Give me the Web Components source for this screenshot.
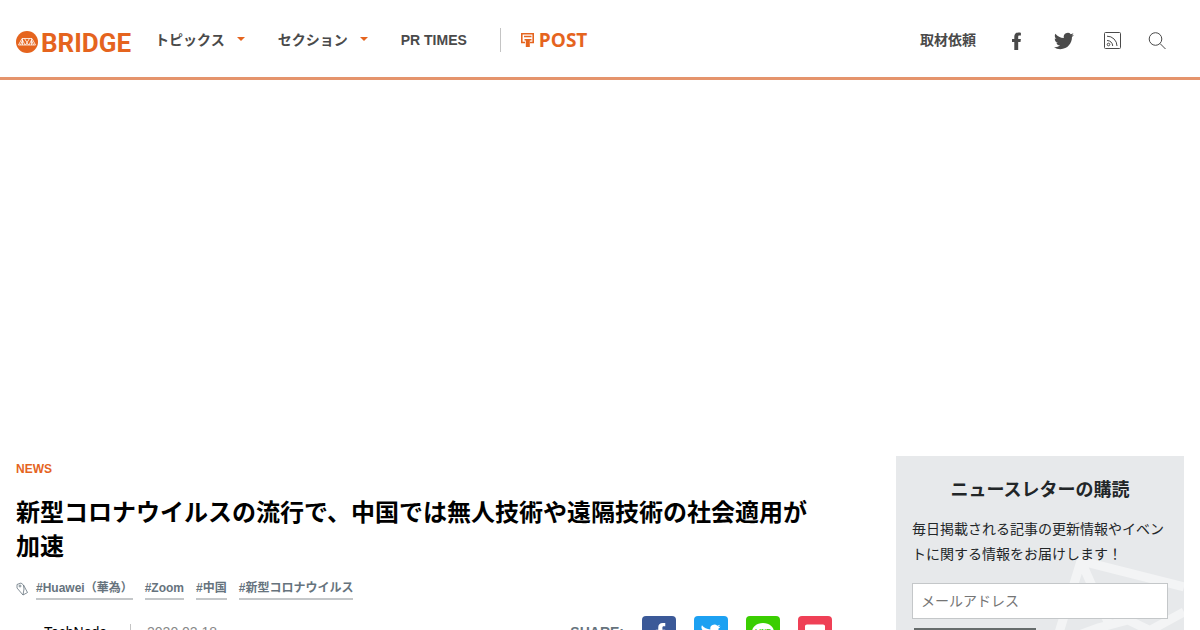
<!DOCTYPE html>
<html lang="ja">
<head>
<meta charset="utf-8">
<title>BRIDGE</title>
<style>
body { margin: 0; background: #fff; color: #000; font-family: "Liberation Sans", "Noto Sans CJK JP", sans-serif; font-size: 14px; overflow-x: hidden; }
</style>
</head>
<body>
<bridge-page></bridge-page>
<script>
const define = (name, html) => {
  const template = document.createElement('template');
  template.innerHTML = html;
  customElements.define(name, class extends HTMLElement {
    constructor() {
      super();
      this.attachShadow({ mode: 'open' }).append(template.content.cloneNode(true));
    }
  });
};

const fb = '<path d="M7.200 18V10H9.500L9.900 6.900H7.200V5C7.200 4.100 7.500 3.600 8.500 3.600H9.900V.7C9.500.6 8.500.5 7.500.5 4.800.5 3.300 2 3.300 4.600V6.900H1V10H3.300V18Z"/>';
const bird = '<path d="M23.950 4.570a10 10 0 0 1-2.820.770 4.960 4.960 0 0 0 2.160-2.720c-.95.550-2 .950-3.120 1.180a4.920 4.920 0 0 0-8.380 4.480C7.690 8.090 4.070 6.130 1.640 3.160a4.820 4.820 0 0 0-.670 2.480c0 1.710.87 3.210 2.190 4.100a4.900 4.900 0 0 1-2.230-.620v.060a4.920 4.920 0 0 0 3.950 4.830 5 5 0 0 1-2.210.090 4.940 4.940 0 0 0 4.600 3.420A9.870 9.870 0 0 1 0 19.540a14 14 0 0 0 7.550 2.210c9.050 0 14-7.500 14-13.980 0-.210 0-.420-.020-.630a9.900 9.900 0 0 0 2.420-2.570Z"/>';

define('bridge-logo', `
<style>
:host { display: block; }
a { display: flex; align-items: center; gap: 2px; color: #e5641e; text-decoration: none; font: 700 26px/28px Roboto, sans-serif; }
svg { display: block; }
</style>
<a href="#"><svg width="23" height="24" viewBox="0 0 23 24" aria-hidden="true"><circle cx="11" cy="11" r="11" fill="#e5641e"/><path d="M2.500 14L6 7.500H16L19.500 14ZM6.500 7.500V14M15.500 7.500V14M6.500 9L9 14M15.500 9L13 14M8.500 7.500L12.500 14M13.500 7.500L9.500 14M4.500 14L6.500 9M17.500 14L15.500 9" fill="none" stroke="#fff" stroke-width=".8"/></svg><span>BRIDGE</span></a>`);

define('nav-link', `
<style>
:host { display: block; }
a { display: flex; align-items: center; gap: 12px; color: #4a4a4a; font-weight: 700; font-size: 14px; line-height: 24px; text-decoration: none; white-space: nowrap; }
.arrow { display: none; border: 4px solid transparent; border-top-color: #e5641e; border-bottom: 0; margin-bottom: 2px; }
:host([menu]) .arrow { display: block; }
</style>
<a href="#"><slot></slot><span class="arrow"></span></a>`);

define('site-header', `
<style>
:host { display: block; border-bottom: 3px solid #e5946c; }
header { display: flex; align-items: center; height: 77px; padding: 0 33px 0 16px; color: #4a4a4a; }
nav { display: flex; align-items: center; margin-left: 24px; flex: 1; }
bridge-logo { padding-top: 8px; }
.main, .side { display: flex; align-items: center; }
.main { padding-top: 2px; gap: 33px; flex: 1; }
.side { padding-top: 4px; }
.rule { height: 24px; border-left: 1px solid #c4c4c4; }
.partner { display: flex; align-items: center; gap: 20px; }
.post { display: flex; align-items: center; gap: 4px; color: #e5641e; font: 700 19px/24px "Open Sans", sans-serif; text-decoration: none; }
.side a { display: block; }
.side nav-link { padding-bottom: 2px; }
svg { display: block; }
.fb { margin-left: 35px; } .tw { margin-left: 32px; } .rss { margin-left: 30px; } .find { margin-left: 26px; }
button { border: 0; padding: 0; background: none; }
</style>
<header>
<bridge-logo></bridge-logo>
<nav>
<div class="main">
<nav-link menu>トピックス</nav-link><nav-link menu>セクション</nav-link><nav-link>PR TIMES</nav-link>
<div class="partner"><span class="rule"></span>
<a class="post" href="#"><svg width="14" height="16" viewBox="0 0 14 16" aria-hidden="true"><path d="M4 10.500H.8V1.800H12.200V10.500H9M3 4.500H10.500" fill="none" stroke="#e5641e" stroke-width="1.600"/><path d="M3.500 7H10.500V8.500H8.800V15H4.800V8.500H3.500Z" fill="#e5641e"/></svg>POST</a></div>
</div>
<div class="side">
<nav-link>取材依頼</nav-link>
<a class="fb" href="#" aria-label="Facebook"><svg width="11" height="18" viewBox="0 0 11 18" fill="#4a4a4a">${fb}</svg></a>
<a class="tw" href="#" aria-label="Twitter"><svg width="20" height="20" viewBox="0 0 24 24" fill="#4a4a4a">${bird}</svg></a>
<a class="rss" href="#" aria-label="RSS"><svg width="18" height="18" viewBox="0 0 18 18" fill="none" stroke="#4a4a4a"><rect x=".5" y=".5" width="16" height="16" rx="1"/><circle cx="4.500" cy="12.500" r="1.300"/><path d="M3 8.500A5.500 5.500 0 0 1 8.700 14M3 4.200A9.800 9.800 0 0 1 13 14"/></svg></a>
<button class="find" aria-label="検索"><svg width="19" height="19" viewBox="0 0 19 19" fill="none" stroke="#4a4a4a"><circle cx="7.500" cy="8" r="6.300"/><path d="M12 12.500L17.500 18"/></svg></button>
</div>
</nav>
</header>`);

define('tag-link', `
<style>
:host { display: block; }
a { display: block; border-bottom: 2px solid #c4c7c9; color: #66737d; font-size: 12px; line-height: 20px; font-weight: 700; text-decoration: none; white-space: nowrap; }
</style>
<a href="#"><slot></slot></a>`);

define('share-button', `
<style>
:host { display: block; }
a { display: block; width: 34px; height: 34px; border-radius: 4px; background: var(--tone); }
::slotted(svg) { display: block; }
</style>
<a href="#"><slot></slot></a>`);

define('article-head', `
<style>
:host { display: block; min-width: 0; }
.kind { display: block; color: #e5641e; font-weight: 700; font-size: 12px; line-height: 26px; text-decoration: none; }
h1 { margin: 14px 0; font-size: 24px; line-height: 34px; font-weight: 700; }
.tags { display: flex; gap: 12px; }
.tags svg { display: block; margin: 4px -4px 0 0; }
.meta { display: flex; align-items: flex-start; margin-top: 16px; line-height: 32px; }
.author { margin-left: 28px; color: #000; text-decoration: none; }
time { display: flex; align-items: center; gap: 16px; margin-left: 23px; color: #888; }
time::before { content: ""; height: 16px; border-left: 1px solid #c4c4c4; }
.share { display: flex; align-items: flex-start; gap: 18px; margin-left: auto; color: #66737d; font-weight: 700; }
</style>
<a class="kind" href="#">NEWS</a>
<h1>新型コロナウイルスの流行で、中国では無人技術や遠隔技術の社会適用が<br>加速</h1>
<div class="tags"><svg width="12" height="14" viewBox="0 0 12 14" fill="none" stroke="#66737d" stroke-width=".8" aria-hidden="true"><path d="M1 2.500L5 1L7.500 3L11.500 10.500L7 13L1 6Z"/><path d="M7.500 3L8 7L7 13"/><circle cx="4" cy="4" r="1"/></svg>
<tag-link>#Huawei（華為）</tag-link><tag-link>#Zoom</tag-link><tag-link>#中国</tag-link><tag-link>#新型コロナウイルス</tag-link></div>
<div class="meta"><a class="author" href="#">TechNode</a><time datetime="2020-02-18">2020.02.18</time>
<div class="share"><span>SHARE:</span>
<share-button style="--tone:#3b5998"><svg width="34" height="34" viewBox="-12 -6 32 32" fill="#fff">${fb}</svg></share-button>
<share-button style="--tone:#1da1f2"><svg width="34" height="34" viewBox="-8 -8 41 41" fill="#fff">${bird}</svg></share-button>
<share-button style="--tone:#3ace01"><svg width="34" height="34" viewBox="0 0 34 34"><path d="M17 7C10.500 7 6 11 6 16s4.500 8.500 9 9q2 .5 1 4 11-6 12-13c0-5-4.500-9-11-9Z" fill="#fff"/><text x="17" y="18" font-size="7" font-weight="700" text-anchor="middle" fill="#3ace01">LINE</text></svg></share-button>
<share-button style="--tone:#ef4056"><svg width="34" height="34" viewBox="0 0 34 34"><path d="M7 10Q7 8.500 9 8.500H25Q27 8.500 27 10V17A10 10 0 0 1 7 17Z" fill="#fff"/><path d="M12 15L17 20L22 15" fill="none" stroke="#ef4056" stroke-width="3"/></svg></share-button>
</div></div>`);

define('news-letter', `
<style>
:host { display: block; position: relative; overflow: hidden; background: #e7e9eb; color: #222628; }
.art { position: absolute; right: 0; top: 96px; }
form { position: relative; display: flex; flex-direction: column; padding: 17px 16px 24px; }
h2 { margin: 0 0 10px; font-size: 18px; line-height: 34px; text-align: center; }
p { margin: 0 0 16px; font-size: 14px; line-height: 25px; }
input { box-sizing: border-box; width: 100%; height: 36px; padding: 0 8px; border: 1px solid #c4c7c9; border-radius: 0; font: inherit; font-size: 14px; background: #fff; }
input::placeholder { color: #757575; }
button { align-self: flex-start; width: 122px; height: 36px; margin: 9px 2px 0; border: 1px solid #666c6c; background: #666c6c; color: #fff; font: inherit; }
</style>
<svg class="art" width="136" height="130" viewBox="0 0 136 130" fill="none" stroke="#f3f4f5" stroke-width="9" aria-hidden="true"><path d="M136 35L33 9L2 110M33 9L60 70M136 60L90 85L60 100M12 90L50 76L80 68L136 95"/></svg>
<form><h2>ニュースレターの購読</h2><p>毎日掲載される記事の更新情報やイベントに関する情報をお届けします！</p>
<input type="email" aria-label="メールアドレス" placeholder="メールアドレス"><button type="button">購読する</button></form>`);

define('bridge-page', `
<style>
:host { display: block; }
.ad { height: 376px; }
main { display: grid; grid-template-columns: minmax(0, 1fr) 288px; gap: 64px; align-items: start; padding: 0 16px 32px; }
</style>
<site-header></site-header><div class="ad"></div>
<main><article-head></article-head><news-letter></news-letter></main>`);
</script>
</body>
</html>
